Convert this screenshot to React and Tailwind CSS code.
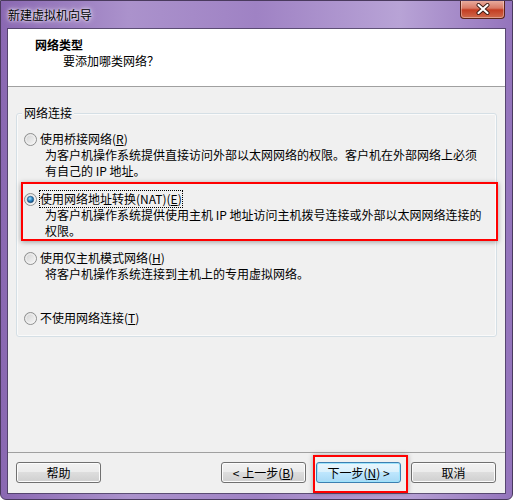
import React from 'react';

const font = "font-['Noto_Sans_CJK_SC','Noto_Sans_CJK_JP',sans-serif]";

const Radio = ({ checked }) => (
    <svg width="13" height="13" viewBox="0 0 13 13" className="shrink-0">
        <defs>
            <linearGradient id="rg" x1="0" y1="0" x2="1" y2="1">
                <stop offset="0" stopColor="#cfcfcf" />
                <stop offset="1" stopColor="#fafafa" />
            </linearGradient>
            <radialGradient id="dot" cx="0.4" cy="0.35" r="0.7">
                <stop offset="0" stopColor="#a6e0fb" />
                <stop offset="0.5" stopColor="#2f8ccc" />
                <stop offset="1" stopColor="#0d3f6e" />
            </radialGradient>
        </defs>
        <circle cx="6.5" cy="6.5" r="6" fill="url(#rg)" stroke="#8e8f8f" strokeWidth="1" />
        <circle cx="6.5" cy="6.5" r="4.6" fill="none" stroke="#f4f4f4" strokeWidth="0.8" />
        {checked && <circle cx="6.5" cy="6.5" r="3.2" fill="url(#dot)" stroke="#1f4f7a" strokeWidth="0.6" />}
    </svg>
);

const Btn = ({ children, primary }) => (
    <button
        className={
            primary
                ? "h-[21px] w-[85px] rounded-[3px] border border-[#3c7fb1] bg-[linear-gradient(#eaf6fd_0%,#d9f0fc_50%,#bee6fd_50%,#a7d9f5_100%)] shadow-[inset_0_0_0_1px_#9ee3fb] text-[12px] leading-none text-black"
                : "h-[21px] w-[85px] rounded-[3px] border border-[#707070] bg-[linear-gradient(#f2f2f2_0%,#ebebeb_50%,#dddddd_50%,#cfcfcf_100%)] shadow-[inset_0_0_0_1px_#fcfcfc] text-[12px] leading-none text-black"
        }
    >
        {children}
    </button>
);

const App = () => {
    return (
        <div className={`w-[513px] h-[500px] flex flex-col overflow-hidden border border-[#4a3a5e] rounded-b-[6px] bg-[linear-gradient(90deg,#8a68b2_0%,#ab92cc_25%,#9f82c4_50%,#b8a3d6_78%,#9474bc_100%)] ${font} text-[12px] leading-[16px] text-black`}>
            {/* title bar */}
            <div className="h-[28px] flex items-start justify-between pl-[7px] pr-[7px] shrink-0">
                <span className="mt-[6px] [text-shadow:0_0_6px_#fff,0_0_3px_#fff]">新建虚拟机向导</span>
                <div className="w-[45px] h-[19px] -mt-px flex items-center justify-center rounded-b-[4px] border border-t-0 border-[#5b2319] bg-[linear-gradient(#eab1a3_0%,#d97a66_45%,#c43d22_55%,#cf6a4c_100%)] shadow-[inset_0_0_0_1px_rgba(255,255,255,0.35)]">
                    <svg width="16" height="12" viewBox="0 0 16 12">
                        <path d="M3.5 2 L12.5 10 M12.5 2 L3.5 10" stroke="#3b1a14" strokeWidth="4" strokeLinecap="round" />
                        <path d="M3.5 2 L12.5 10 M12.5 2 L3.5 10" stroke="#ffffff" strokeWidth="2.2" strokeLinecap="round" />
                    </svg>
                </div>
            </div>

            {/* client area */}
            <div className="mx-[7px] h-[464px] flex flex-col bg-[#f0f0f0] shadow-[0_0_0_1px_rgba(60,50,80,0.7)]">
                <div className="h-[58px] shrink-0 bg-white border-b border-[#a0a0a0] pt-[8px]">
                    <div className="pl-[27px] font-bold">网络类型</div>
                    <div className="pl-[55px]">要添加哪类网络？</div>
                </div>

                <div className="flex-1">
                    <div className="relative mt-[26px] ml-[8px] w-[481px] rounded-[3px] border border-[#d5dfe5] shadow-[inset_0_0_0_1px_#fafafa] pt-[17px] pb-[10px]">
                        <span className="absolute top-[-9px] left-[5px] px-[2px] bg-[#f0f0f0]">网络连接</span>

                        <div className="pl-[7px]">
                            <div className="flex items-center gap-[3px]">
                                <Radio />
                                <span>使用桥接网络(<u>R</u>)</span>
                            </div>
                            <div className="pl-[21px] whitespace-nowrap">
                                <div>为客户机操作系统提供直接访问外部以太网网络的权限。客户机在外部网络上必须</div>
                                <div>有自己的 IP 地址。</div>
                            </div>
                        </div>

                        <div className="relative mt-[12px] pl-[7px]">
                            <span className="absolute left-[4px] right-[-2px] top-[-9px] bottom-[-2px] border-2 border-[#ff0000] shadow-[0_1px_5px_rgba(0,0,0,0.35)]" />
                            <div className="flex items-center gap-[3px]">
                                <Radio checked />
                                <span className="outline-1 outline-dotted outline-black">使用网络地址转换(NAT)(<u>E</u>)</span>
                            </div>
                            <div className="pl-[21px] whitespace-nowrap">
                                <div>为客户机操作系统提供使用主机 IP 地址访问主机拨号连接或外部以太网网络连接的</div>
                                <div>权限。</div>
                            </div>
                        </div>

                        <div className="mt-[11px] pl-[7px]">
                            <div className="flex items-center gap-[3px]">
                                <Radio />
                                <span>使用仅主机模式网络(<u>H</u>)</span>
                            </div>
                            <div className="pl-[21px] h-[32px] whitespace-nowrap">
                                <div>将客户机操作系统连接到主机上的专用虚拟网络。</div>
                            </div>
                        </div>

                        <div className="mt-[12px] pl-[7px]">
                            <div className="flex items-center gap-[3px]">
                                <Radio />
                                <span>不使用网络连接(<u>T</u>)</span>
                            </div>
                        </div>
                    </div>
                </div>

                {/* footer */}
                <div className="shrink-0 border-t border-[#a0a0a0] pt-[9px] pb-[10px] pl-[8px] flex items-center">
                    <Btn>帮助</Btn>
                    <div className="ml-[120px] flex gap-[10px]">
                        <Btn>&lt; 上一步(<u>B</u>)</Btn>
                        <div className="relative">
                            <span className="absolute -left-[3px] -right-[7px] -top-[7px] -bottom-[10px] border-2 border-[#ff0000] shadow-[0_0_5px_rgba(0,0,0,0.3)]" />
                            <Btn primary>下一步(<u>N</u>) &gt;</Btn>
                        </div>
                        <Btn>取消</Btn>
                    </div>
                </div>
            </div>
        </div>
    );
};

export default App;
